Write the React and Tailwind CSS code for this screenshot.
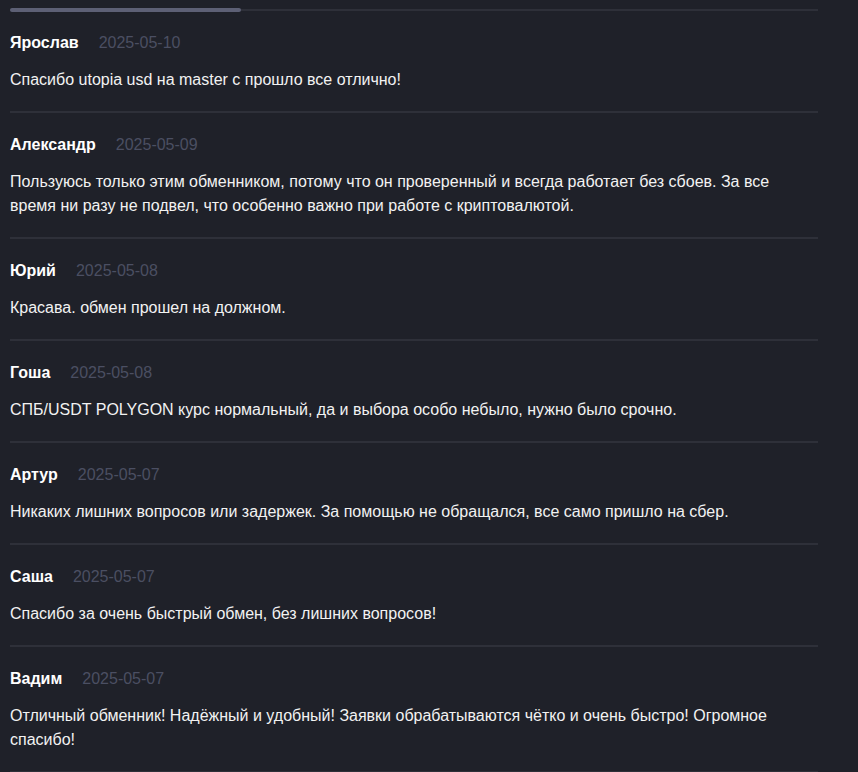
import React from "react";

const reviews = [
  { name: "Ярослав", date: "2025-05-10", text: "Спасибо utopia usd на master с прошло все отлично!" },
  { name: "Александр", date: "2025-05-09", text: "Пользуюсь только этим обменником, потому что он проверенный и всегда работает без сбоев. За все время ни разу не подвел, что особенно важно при работе с криптовалютой." },
  { name: "Юрий", date: "2025-05-08", text: "Красава. обмен прошел на должном." },
  { name: "Гоша", date: "2025-05-08", text: "СПБ/USDT POLYGON курс нормальный, да и выбора особо небыло, нужно было срочно." },
  { name: "Артур", date: "2025-05-07", text: "Никаких лишних вопросов или задержек. За помощью не обращался, все само пришло на сбер." },
  { name: "Саша", date: "2025-05-07", text: "Спасибо за очень быстрый обмен, без лишних вопросов!" },
  { name: "Вадим", date: "2025-05-07", text: "Отличный обменник! Надёжный и удобный! Заявки обрабатываются чётко и очень быстро! Огромное спасибо!" },
];

export default function App() {
  return (
    <div className="min-h-[772px] w-full bg-[#1f2129] pl-[10px] pt-[9px]" style={{ fontFamily: '"Liberation Sans", Arial, sans-serif' }}>
      <div className="w-[808px]">
        <div className="relative h-[2px] bg-[#2e3039]">
          <div className="absolute left-0 top-[-1px] h-[4px] w-[231px] rounded-full bg-[#5d6075]" />
        </div>
        {reviews.map((r, i) => (
          <div key={i} className={i > 0 ? "border-t-2 border-[#2e3039]" : ""}>
            <div className="pt-[20px] pb-[19px]">
              <div className="flex items-center gap-[20px] text-[16px] leading-[24px]">
                <span className="font-bold text-white">{r.name}</span>
                <span className="text-[#4b4f62]">{r.date}</span>
              </div>
              <p className="mt-[13px] text-[16px] leading-[24px] text-[#f2f2f2]">{r.text}</p>
            </div>
          </div>
        ))}
        <div className="h-[2px] bg-[#2e3039]" />
      </div>
    </div>
  );
}
